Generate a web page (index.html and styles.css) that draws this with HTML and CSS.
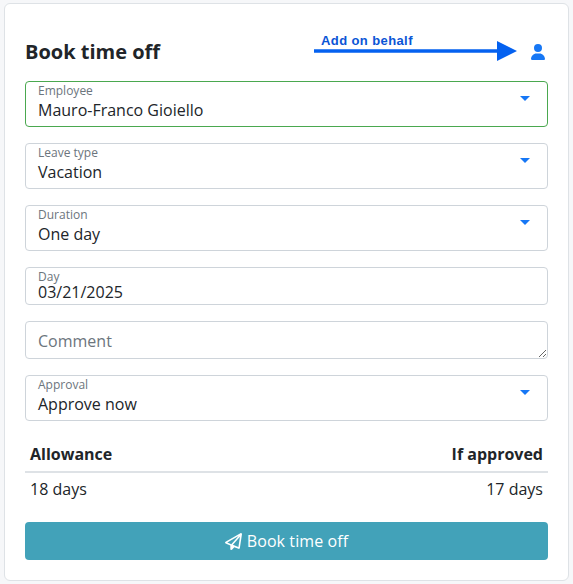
FILE: index.html
```html
<!DOCTYPE html>
<html lang="en">
<head>
<meta charset="utf-8">
<title>Book time off</title>
<link rel="stylesheet" href="styles.css">
</head>
<body>
<main class="card">
  <header class="head">
    <h1 class="title">Book time off</h1>
    <svg class="user" viewBox="0 0 448 512" aria-hidden="true"><path d="M224 256A128 128 0 1 0 224 0a128 128 0 1 0 0 256zm-45.7 48C79.8 304 0 383.8 0 482.3C0 498.7 13.3 512 29.7 512H418.3c16.4 0 29.7-13.3 29.7-29.7C448 383.8 368.2 304 269.7 304H178.3z"/></svg>
    <div class="note">
      <span class="note-text">Add on behalf</span>
      <svg class="note-arrow" viewBox="0 0 203 20" aria-hidden="true"><path d="M0 8.2H183V0L203 10L183 20V11.8H0Z"/></svg>
    </div>
  </header>
  <form class="fields">
    <div class="field select valid"><span class="label">Employee</span><span class="value">Mauro-Franco Gioiello</span><i class="caret"></i></div>
    <div class="field select"><span class="label">Leave type</span><span class="value">Vacation</span><i class="caret"></i></div>
    <div class="field select"><span class="label">Duration</span><span class="value">One day</span><i class="caret"></i></div>
    <div class="field date"><span class="label">Day</span><span class="value">03/21/2025</span></div>
    <textarea class="comment" placeholder="Comment"></textarea>
    <div class="field select"><span class="label">Approval</span><span class="value">Approve now</span><i class="caret"></i></div>
  </form>
  <table class="allow">
    <thead><tr><th>Allowance</th><th class="right">If approved</th></tr></thead>
    <tbody><tr><td>18 days</td><td class="right">17 days</td></tr></tbody>
  </table>
  <button class="submit" type="button">
    <svg class="plane" viewBox="0 0 512 512" aria-hidden="true"><path d="M16.1 260.2c-22.6 12.9-20.5 47.3 3.6 57.3L160 376V479.3c0 18.1 14.6 32.7 32.7 32.7c9.7 0 18.9-4.3 25.1-11.8l62-74.3 123.9 51.6c18.9 7.9 40.8-4.5 43.9-24.7l64-416c1.9-12.1-3.4-24.3-13.5-31.2s-23.3-7.5-34-1.4l-448 256zm52.1 25.5L409.7 90.6 190.1 336l1.2 1L68.2 285.7zM403.3 425.4L236.7 355.9 450.8 116.6 403.3 425.4z"/></svg>
    Book time off
  </button>
</main>
</body>
</html>
```
FILE: styles.css
```css
* { box-sizing: border-box; }
html, body { height: 100%; }
body {
  margin: 0;
  padding: 3px 4px 3px 4px;
  background: #f6f7f9;
  font-family: "Open Sans", "Noto Sans", sans-serif;
  font-size: 16px;
  color: #212529;
  overflow: hidden;
}
.card {
  width: 565px;
  height: 578px;
  padding: 0 20px;
  background: #fff;
  border: 1px solid #dee2e6;
  border-radius: 6px;
}
.head {
  position: relative;
  height: 77px;
  display: flex;
  align-items: center;
  justify-content: space-between;
  padding: 19px 3px 0 0;
}
.title {
  margin: 0;
  font-size: 20px;
  font-weight: 700;
  line-height: 24px;
}
.user { width: 14px; height: 16px; fill: #1677f5; margin-top: 0; }
.note { position: absolute; left: 289px; top: 29px; width: 203px; height: 29px; }
.note-text {
  position: absolute;
  left: 7px;
  top: 0;
  font-family: "Liberation Sans", Arial, sans-serif;
  font-size: 13px;
  font-weight: 700;
  line-height: 16px;
  letter-spacing: 0.4px;
  color: #0b55d6;
  white-space: nowrap;
}
.note-arrow { position: absolute; left: 0; top: 8px; width: 203px; height: 20px; fill: #0461f0; }
.fields { display: flex; flex-direction: column; gap: 16px; }
.field {
  position: relative;
  display: flex;
  flex-direction: column;
  height: 46px;
  padding: 1px 12px 0;
  border: 1px solid #ced4da;
  border-radius: 4px;
}
.field.valid { border-color: #4aa84f; }
.field.date { height: 38px; padding-top: 2px; }
.label { font-size: 12px; line-height: 16px; color: #6c757d; }
.value { font-size: 16px; line-height: 22px; color: #212529; }
.date .label { line-height: 14px; }
.date .value { line-height: 16px; }
.caret {
  position: absolute;
  right: 17px;
  top: 14px;
  width: 0;
  height: 0;
  border-left: 5px solid transparent;
  border-right: 5px solid transparent;
  border-top: 5.5px solid #1677f5;
}
.comment {
  display: block;
  width: 100%;
  height: 38px;
  margin: 0;
  padding: 7px 12px 5px;
  border: 1px solid #ced4da;
  border-radius: 4px;
  background: #fff;
  font: 16px/24px "Open Sans", "Noto Sans", sans-serif;
  color: #212529;
  outline: none;
}
.comment::placeholder { color: #6c757d; opacity: 1; }
.allow {
  width: 100%;
  margin-top: 16px;
  border-collapse: collapse;
  font-size: 16px;
}
.allow th, .allow td { line-height: 24px; text-align: left; }
.allow th { padding: 5px 5px 5px; font-weight: 700; border-bottom: 2px solid #dee2e6; }
.allow td { padding: 4px 5px 9px; }
.allow .right { text-align: right; }
.submit {
  display: flex;
  align-items: center;
  justify-content: center;
  gap: 5px;
  width: 100%;
  height: 38px;
  margin-top: 12px;
  padding: 0;
  border: 0;
  border-radius: 4px;
  background: #42a2b9;
  color: #fff;
  font: 16px/24px "Open Sans", "Noto Sans", sans-serif;
  letter-spacing: 0.1px;
}
.plane { width: 17px; height: 17px; fill: #fff; }
```
